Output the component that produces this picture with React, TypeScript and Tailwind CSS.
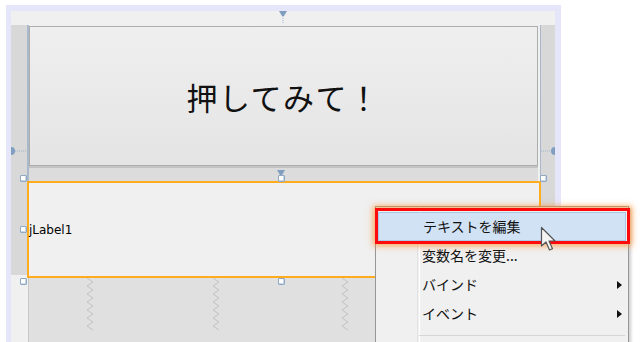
import React from 'react';

const jp = { fontFamily: '"Noto Sans CJK JP", "Noto Sans", sans-serif' };

function Handle({ x, y }: { x: number; y: number }) {
  return (
    <div
      className="absolute w-[7px] h-[7px] bg-white border border-[#8fa8c4] rounded-[1px] shadow-[inset_-1px_-1px_0_#c9d6e4]"
      style={{ left: x - 3, top: y - 3 }}
    />
  );
}

function SubArrow() {
  return (
    <svg width="5" height="8" viewBox="0 0 5 8" className="absolute right-[6px] top-1/2 -translate-y-1/2">
      <polygon points="0,0 5,4 0,8" fill="#111" />
    </svg>
  );
}

export default function App() {
  // zigzag columns in the empty grid area
  const zig = (x: number) => {
    const pts: string[] = [];
    for (let i = 0; i < 14; i++) pts.push(`${x + (i % 2 === 0 ? -3 : 3)},${i * 4}`);
    return pts.join(' ');
  };

  return (
    <div className="relative w-[640px] h-[342px] bg-white overflow-hidden pl-[6px] pt-[5px]" style={jp}>
      {/* designer frame */}
      <div className="w-[555px] h-[337px] bg-[#e6e6fb] pl-[5px] pr-[6px] pt-[6px]">
        <div className="h-full bg-[#f0f0f0] flex flex-col">
          <div className="h-[14px] shrink-0" />
          <div className="flex flex-1">
            {/* left column */}
            <div className="w-[16px] flex flex-col">
              <div className="h-[250px] bg-[#d8d8d8]" />
            </div>

            {/* center column */}
            <div className="w-[514px] flex flex-col">
              <div className="h-[156px] border-l-2 border-r border-[#a9b8ca] pr-[2px] flex flex-col">
                <div className="h-[1px]" />
                <div className="h-[140px] border border-[#adadad] bg-gradient-to-b from-[#efefef] to-[#e4e4e4] flex items-center justify-center">
                  <span className="text-[31px] text-[#111] tracking-[1.5px] leading-none">押してみて！</span>
                </div>
                <div className="flex-1 border-t-2 border-[#c4c4c4] bg-[#dcdcdc]" />
              </div>
              <div className="h-[97px] border-2 border-[#ffad1f] bg-[#f0f0f0] flex items-center">
                <span className="text-[12px] text-[#000] leading-none" style={{ fontFamily: '"DejaVu Sans", sans-serif' }}>
                  jLabel1
                </span>
              </div>
              <div className="flex-1 ml-[1px] border-l border-[#c8c8c8] bg-[#e0e0e0]">
                <svg width="512" height="64" className="block">
                  {[61, 187, 316].map((x) => (
                    <polyline key={x} points={zig(x)} fill="none" stroke="#c3c3c3" strokeWidth="1" />
                  ))}
                </svg>
              </div>
            </div>

            {/* right column */}
            <div className="w-[14px] bg-[#d8d8d8]" />
          </div>
        </div>
      </div>

      {/* anchors */}
      <svg className="absolute left-0 top-0" width="640" height="342">
        <polygon points="279,11 287,11 284,16 282,16" fill="#7f9ec0" />
        <line x1="283" y1="16" x2="283" y2="23" stroke="#9cb3cc" strokeDasharray="1 1" />
        <polygon points="277,170 285,170 282,175 280,175" fill="#7f9ec0" />
        <path d="M11 147 A4 4 0 0 1 11 155 Z" fill="#7f9ec0" />
        <line x1="15" y1="151" x2="27" y2="151" stroke="#9cb3cc" strokeDasharray="1 1" />
        <path d="M555 147 A4 4 0 0 0 555 155 Z" fill="#7f9ec0" />
        <line x1="541" y1="151" x2="551" y2="151" stroke="#9cb3cc" strokeDasharray="1 1" />
      </svg>

      {/* selection handles */}
      <Handle x={23} y={178} />
      <Handle x={281} y={178} />
      <Handle x={543} y={178} />
      <Handle x={23} y={229} />
      <Handle x={23} y={281} />
      <Handle x={281} y={281} />

      {/* context menu */}
      <div className="absolute left-[375px] top-[206px] w-[254px] h-[150px] border border-[#979797] bg-[#f0f0f0] shadow-[2px_2px_3px_rgba(0,0,0,0.2)]">
        <div className="absolute left-[41px] top-0 bottom-0 w-[2px] border-l border-[#e2e3e3] shadow-[1px_0_0_#fff]" />
        <div className="relative flex flex-col pt-[5px] text-[14px] text-[#111]">
          <div className="mx-[2px] h-[29px] bg-[#d0e2f4] border border-[#a9c7e6] flex items-center pl-[44px]">
            テキストを編集
          </div>
          <div className="h-[29px] flex items-center pl-[46px]">変数名を変更...</div>
          <div className="relative h-[29px] flex items-center pl-[46px]">
            バインド
            <SubArrow />
          </div>
          <div className="relative h-[29px] flex items-center pl-[46px]">
            イベント
            <SubArrow />
          </div>
          <div className="ml-[43px] mr-[3px] mt-[7px] h-[1px] bg-[#d7d7d7]" />
        </div>
      </div>

      {/* highlight frame */}
      <div className="absolute left-[375px] top-[208px] w-[255px] h-[36px] border-[3px] border-[#ff0a0a] shadow-[0_0_6px_2px_rgba(255,140,40,0.7)]" />

      {/* mouse cursor */}
      <svg className="absolute left-[540px] top-[226px]" width="18" height="28" viewBox="0 0 18 28">
        <path d="M1.5 1.5 L1.5 20 L6 16 L9.5 24 L12.5 22.7 L9 15 L15 15 Z" fill="#f4f4f4" stroke="#555" strokeWidth="1.2" strokeLinejoin="round" />
      </svg>
    </div>
  );
}
